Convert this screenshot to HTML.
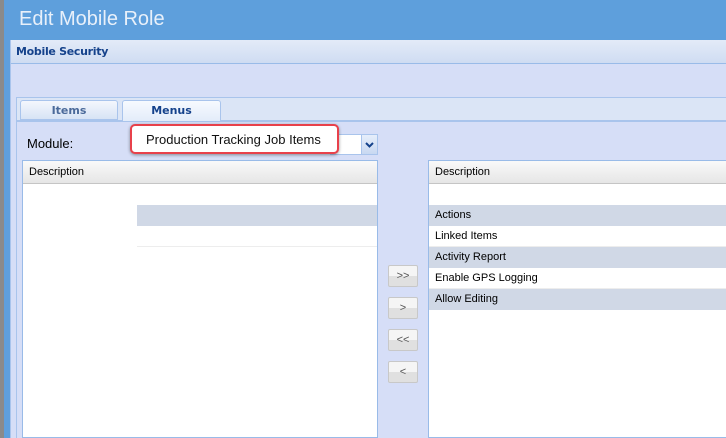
<!DOCTYPE html>
<html><head><style>
*{margin:0;padding:0;box-sizing:border-box}
body{width:726px;height:438px;overflow:hidden;position:relative;background:#5e9fdc;font-family:"Liberation Sans",sans-serif}
.a{position:absolute}
.t{font-size:11px;color:#000}
.b{background:linear-gradient(#f5f5f5 50%,#e0e0e0 50%);border:1px solid #c8c8c8;border-radius:2px;font-size:11px;color:#555;text-align:center;line-height:20px;width:30px;height:22px;left:388px}
</style></head><body>
<div class="a" style="left:0;top:0;width:4px;height:438px;background:#8a8a8a"></div>
<div class="a" style="left:19px;top:8px;font-size:20px;color:#e8f0fa">Edit Mobile Role</div>
<div class="a" style="left:10px;top:40px;width:716px;height:398px;background:#d6def7;border-left:1px solid #a9c4ec"></div>
<div class="a" style="left:11px;top:40px;width:715px;height:24px;background:linear-gradient(#e3ebf8,#cfdcf2);border-bottom:1px solid #99bbe8"></div>
<div class="a" style="left:16px;top:45px;font-size:11px;font-weight:bold;color:#15428b;font-family:'DejaVu Sans',sans-serif;letter-spacing:-0.3px">Mobile Security</div>
<div class="a" style="left:16px;top:97px;width:710px;height:24px;background:#dbe5f6;border:1px solid #a9c4ec;border-right:none"></div>
<div class="a" style="left:20px;top:100px;width:98px;height:20px;background:linear-gradient(#f4f7fd,#d7e3f5);border:1px solid #a9c4ec;border-radius:3px 3px 0 0;font-size:11px;font-weight:bold;color:#4b6a9a;text-align:center;line-height:19px;font-family:'DejaVu Sans',sans-serif">Items</div>
<div class="a" style="left:122px;top:100px;width:99px;height:22px;background:linear-gradient(#f7faff,#e2ebf9);border:1px solid #a9c4ec;border-bottom:none;border-radius:3px 3px 0 0;font-size:11px;font-weight:bold;color:#15428b;text-align:center;line-height:19px;font-family:'DejaVu Sans',sans-serif">Menus</div>
<div class="a" style="left:16px;top:121px;width:710px;height:317px;border-left:1px solid #a9c4ec;border-top:1px solid #a9c4ec"></div>
<div class="a" style="left:27px;top:136px;font-size:13px">Module:</div>
<div class="a" style="left:330px;top:134px;width:48px;height:21px;background:#fff;border:1px solid #a9c4ec"></div>
<div class="a" style="left:361px;top:134px;width:17px;height:21px;background:linear-gradient(#e6eefb,#c8d8f1);border:1px solid #a9c4ec"><svg width="15" height="19" style="position:absolute;left:0;top:0"><path d="M4 8 L7.5 11.5 L11 8" stroke="#15428b" stroke-width="2" fill="none"/></svg></div>
<div class="a" style="left:22px;top:160px;width:356px;height:278px;background:#fff;border:1px solid #99bbe8"></div>
<div class="a t" style="left:23px;top:161px;width:354px;height:23px;background:linear-gradient(#f9f9f9,#e6e6e6);border-bottom:1px solid #c5c5c5;padding:5px 6px">Description</div>
<div class="a" style="left:137px;top:205px;width:240px;height:21px;background:#d0d8e6"></div>
<div class="a" style="left:137px;top:246px;width:240px;height:1px;background:#ededed"></div>
<div class="a" style="left:428px;top:160px;width:298px;height:278px;background:#fff;border:1px solid #99bbe8;border-right:none"></div>
<div class="a t" style="left:429px;top:161px;width:297px;height:23px;background:linear-gradient(#f9f9f9,#e6e6e6);border-bottom:1px solid #c5c5c5;padding:5px 6px">Description</div>
<div class="a t" style="left:429px;top:205px;width:297px;height:21px;background:#d0d8e6;padding:4px 6px">Actions</div>
<div class="a t" style="left:429px;top:226px;width:297px;height:21px;border-bottom:1px solid #ededed;padding:4px 6px">Linked Items</div>
<div class="a t" style="left:429px;top:247px;width:297px;height:21px;background:#d0d8e6;padding:4px 6px">Activity Report</div>
<div class="a t" style="left:429px;top:268px;width:297px;height:21px;border-bottom:1px solid #ededed;padding:4px 6px">Enable GPS Logging</div>
<div class="a t" style="left:429px;top:289px;width:297px;height:21px;background:#d0d8e6;padding:4px 6px">Allow Editing</div>
<div class="a b" style="top:265px">&gt;&gt;</div>
<div class="a b" style="top:297px">&gt;</div>
<div class="a b" style="top:329px">&lt;&lt;</div>
<div class="a b" style="top:361px">&lt;</div>
<div class="a" style="left:130px;top:124px;width:209px;height:30px;background:#fff;border:2px solid #e8414b;border-radius:5px;box-shadow:0 1px 3px rgba(0,0,0,.4);font-size:13px;color:#111;padding:6px 0 0 14px">Production Tracking Job Items</div>
</body></html>
